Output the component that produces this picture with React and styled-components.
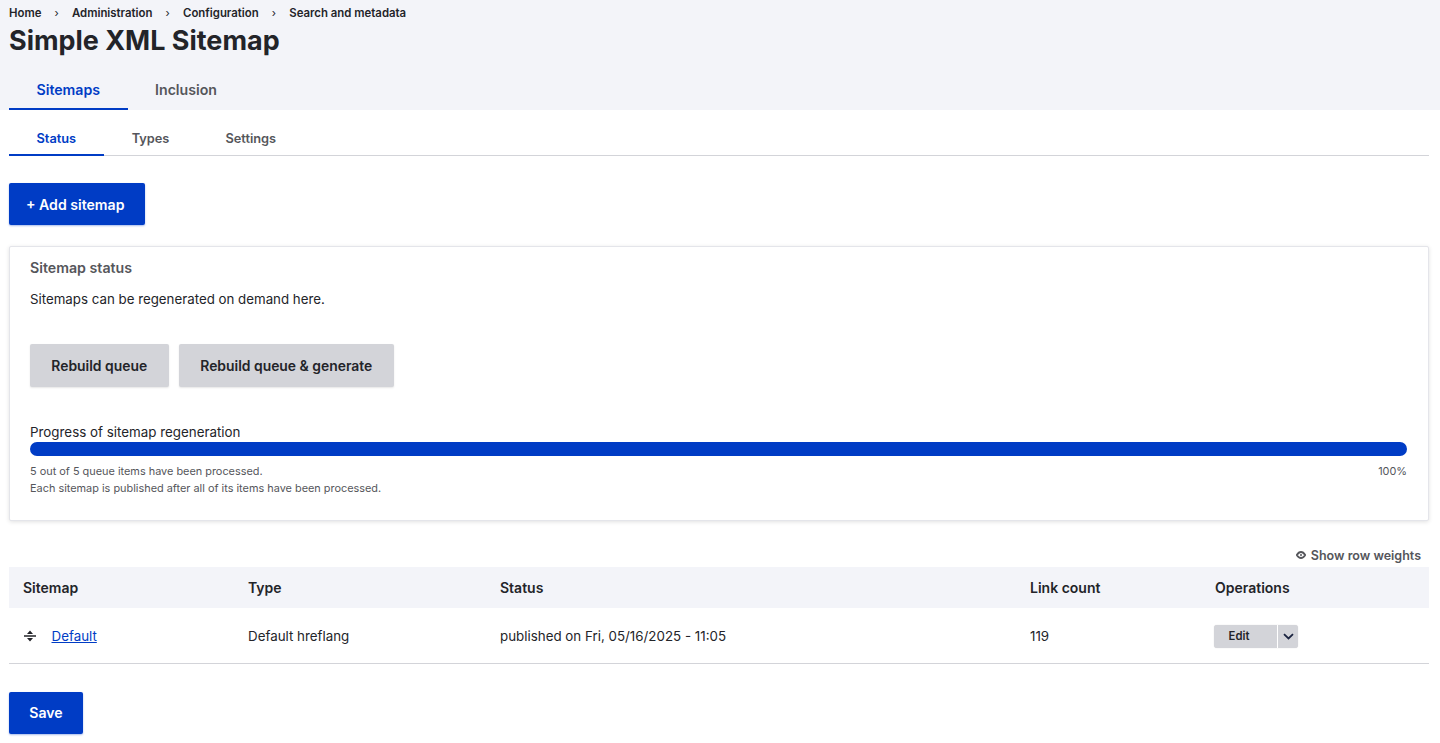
import React from "react";
import styled, { createGlobalStyle } from "styled-components";

const Global = createGlobalStyle`
  html, body { margin: 0; padding: 0; background: #fff; }
  body { font-family: Inter, "Liberation Sans", sans-serif; color: #232429; font-size: 13.35px; overflow: hidden; }
  * { box-sizing: border-box; }
`;

const Page = styled.div`height: 743px; overflow: hidden;`;
const Header = styled.header`
  background: #f3f4f9; height: 110px; padding: 6px 11px 0 9px;
  display: flex; flex-direction: column;
`;
const Crumbs = styled.nav`
  display: flex; align-items: center; height: 13px; font-size: 11.4px; font-weight: 600; color: #232429;
`;
const Crumb = styled.span``;
const Sep = styled.span`width: 30.5px; text-align: center; font-weight: 400; font-size: 11px;`;
const Title = styled.h1`
  margin: 5px 0 0; font-size: 26.95px; line-height: 34px; font-weight: 700; color: #232429;
`;
const PrimaryTabs = styled.div`display: flex; margin-top: 14px;`;
const PrimaryTab = styled.a`
  height: 38px; padding: 0 27.5px 2px; display: flex; align-items: center;
  font-size: 14.15px; font-weight: 600;
  color: ${p => (p.$active ? "#003cc5" : "#55565b")};
  border-bottom: 2px solid ${p => (p.$active ? "#003cc5" : "transparent")};
`;
const Main = styled.main`padding: 0 11px 0 9px;`;
const SecondaryTabs = styled.div`display: flex; height: 46px; border-bottom: 1px solid #d3d4d9;`;
const SecondaryTab = styled.a`
  height: 46px; padding: 14px ${p => p.$pad || 28}px 1px; display: flex; align-items: center;
  font-size: 12.8px; font-weight: 600;
  color: ${p => (p.$active ? "#003cc5" : "#55565b")};
  border-bottom: 2px solid ${p => (p.$active ? "#003cc5" : "transparent")};
`;
const PrimaryButton = styled.button`
  display: flex; align-items: center; justify-content: center;
  height: 42px; width: ${p => p.$w}px; margin-top: ${p => p.$mt}px; padding: 0 ${p => p.$shift || 0}px 0 0;
  background: #003cc5; border: 0; border-radius: 2px; color: #fff;
  font: 600 14.1px Inter, sans-serif; box-shadow: 0 1px 2px rgba(0,60,197,.35);
`;
const Card = styled.section`
  margin-top: 21px; height: 275px; padding: 12px 21px 0 20px; background: #fff;
  border: 1px solid #e4e5ea; border-radius: 2px; box-shadow: 0 1px 4px rgba(0,0,0,.12);
`;
const CardTitle = styled.div`font-size: 14.2px; font-weight: 600; color: #55565b; line-height: 17px;`;
const CardText = styled.p`margin: 14px 0 0; font-size: 13.3px; line-height: 18px;`;
const ButtonRow = styled.div`display: flex; gap: 10px; margin-top: 36px;`;
const GreyButton = styled.button`
  height: 43px; width: ${p => p.$w}px; padding: 0; background: #d3d4d9; border: 0; border-radius: 2px;
  color: #232429; font: 600 13.9px Inter, sans-serif; box-shadow: 0 1px 2px rgba(0,0,0,.1);
`;
const ProgressLabel = styled.div`margin-top: 36px; font-size: 13.36px; line-height: 18px;`;
const Bar = styled.div`height: 14px; margin-top: 1px; background: #003cc5; border-radius: 7px;`;
const ProgressInfo = styled.div`
  display: flex; justify-content: space-between; margin-top: 7px; font-size: 10.9px; line-height: 17px; color: #55565b;
`;
const WeightsRow = styled.div`
  display: flex; justify-content: flex-end; align-items: center; gap: 5px; height: 16px; margin-top: 26px; padding-right: 8px;
  font-size: 12.5px; font-weight: 600; color: #55565b;
`;
const Table = styled.table`
  width: 100%; margin-top: 4px; border-collapse: collapse; table-layout: fixed;
`;
const Th = styled.th`
  height: 41px; background: #f3f4f9; text-align: left; padding: 0 0 0 14px; font-size: 14px; font-weight: 600; color: #232429;
`;
const Td = styled.td`
  height: 55.5px; padding: 0 0 0 14px; font-size: 13.35px; color: #232429; border-bottom: 1px solid #d3d4d9;
`;
const SitemapCell = styled.div`display: flex; align-items: center; gap: 14.5px;`;
const Link = styled.a`color: #003cc5; text-decoration: underline;`;
const Dropbutton = styled.div`
  display: flex; width: 84px; height: 23px; margin: 1px 0 0 -1px; background: #d3d4d9; border-radius: 3px; box-shadow: 0 0 1px rgba(0,0,0,.2);
`;
const DropMain = styled.span`
  width: 63px; padding-right: 13px; display: flex; align-items: center; justify-content: center; font-size: 11.3px; font-weight: 600; color: #232429;
`;
const DropToggle = styled.span`
  flex: 1; display: flex; align-items: center; justify-content: center; border-left: 1px solid #fff;
`;

export default function App() {
  return (
    <Page>
      <Global />
      <Header>
        <Crumbs>
          <Crumb>Home</Crumb><Sep>›</Sep>
          <Crumb>Administration</Crumb><Sep>›</Sep>
          <Crumb>Configuration</Crumb><Sep>›</Sep>
          <Crumb>Search and metadata</Crumb>
        </Crumbs>
        <Title>Simple XML Sitemap</Title>
        <PrimaryTabs>
          <PrimaryTab $active>Sitemaps</PrimaryTab>
          <PrimaryTab>Inclusion</PrimaryTab>
        </PrimaryTabs>
      </Header>
      <Main>
        <SecondaryTabs>
          <SecondaryTab $active $pad={27.5}>Status</SecondaryTab>
          <SecondaryTab>Types</SecondaryTab>
          <SecondaryTab>Settings</SecondaryTab>
        </SecondaryTabs>
        <PrimaryButton $w={135.5} $mt={27} $shift={3}>+ Add sitemap</PrimaryButton>
        <Card>
          <CardTitle>Sitemap status</CardTitle>
          <CardText>Sitemaps can be regenerated on demand here.</CardText>
          <ButtonRow>
            <GreyButton $w={138.5}>Rebuild queue</GreyButton>
            <GreyButton $w={215.5}>Rebuild queue &amp; generate</GreyButton>
          </ButtonRow>
          <ProgressLabel>Progress of sitemap regeneration</ProgressLabel>
          <Bar />
          <ProgressInfo>
            <div>5 out of 5 queue items have been processed.<br />Each sitemap is published after all of its items have been processed.</div>
            <div>100%</div>
          </ProgressInfo>
        </Card>
        <WeightsRow>
          <svg width="10" height="8" viewBox="0 0 10 8" fill="none">
            <path d="M.8 4C2 2 3.400 1 5 1s3 1 4.200 3C8 6 6.600 7 5 7S2 6 .8 4Z" stroke="#55565b" strokeWidth="1.800" />
            <circle cx="5" cy="4" r="1" fill="#55565b" />
          </svg>
          Show row weights
        </WeightsRow>
        <Table>
          <colgroup>
            <col style={{ width: 225 }} />
            <col style={{ width: 252 }} />
            <col style={{ width: 530 }} />
            <col style={{ width: 185 }} />
            <col />
          </colgroup>
          <thead>
            <tr>
              <Th>Sitemap</Th><Th>Type</Th><Th>Status</Th><Th>Link count</Th><Th>Operations</Th>
            </tr>
          </thead>
          <tbody>
            <tr>
              <Td>
                <SitemapCell>
                  <svg width="14" height="14" viewBox="0 0 14 14" fill="#232429">
                    <path d="M7 1.500 10 5H4ZM1 6.200h12v1.500H1ZM7 12.500 4 9h6Z" />
                  </svg>
                  <Link>Default</Link>
                </SitemapCell>
              </Td>
              <Td>Default hreflang</Td>
              <Td>published on Fri, 05/16/2025 - 11:05</Td>
              <Td>119</Td>
              <Td>
                <Dropbutton>
                  <DropMain>Edit</DropMain>
                  <DropToggle>
                    <svg width="11" height="7" viewBox="0 0 11 7" fill="none">
                      <path d="M1 1.200 5.500 5.500 10 1.200" stroke="#1a2340" strokeWidth="1.800" />
                    </svg>
                  </DropToggle>
                </Dropbutton>
              </Td>
            </tr>
          </tbody>
        </Table>
        <PrimaryButton $w={74} $mt={27.5}>Save</PrimaryButton>
      </Main>
    </Page>
  );
}
